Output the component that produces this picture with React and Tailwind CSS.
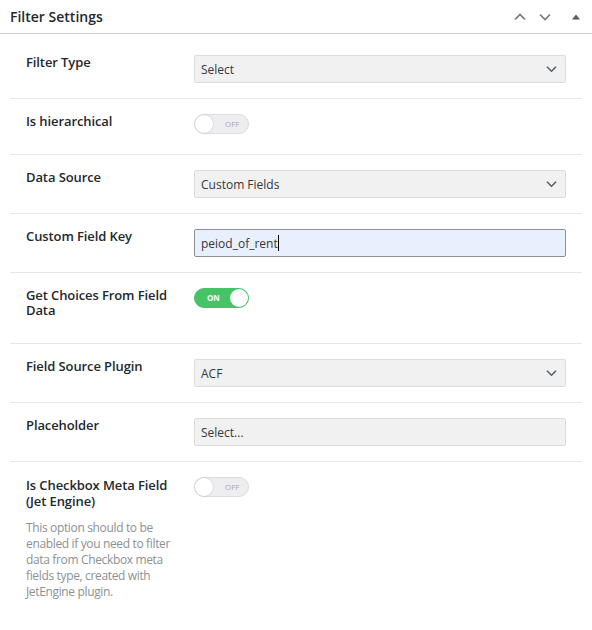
import React from 'react';

const font = { fontFamily: '"Open Sans", "Noto Sans", sans-serif' };

function Chevron({ className }) {
    return (
        <svg width="12" height="8" viewBox="0 0 12 8" className={className} fill="none">
            <path d="M1 1.5 6 6.5 11 1.5" stroke="currentColor" strokeWidth="1.6" />
        </svg>
    );
}

function SelectBox({ value }) {
    return (
        <div className="h-[28px] w-full flex items-center justify-between bg-[#f1f1f1] border border-[#dcdcde] rounded-[2px] pl-[6px] pr-[8px] text-[12px] text-[#32373c]">
            <span className="pt-[1px]">{value}</span>
            <Chevron className="text-[#555d66] w-[11px]" />
        </div>
    );
}

function TextBox({ value, caret, bg = 'bg-[#f1f1f1]', border = 'border-[#dcdcde]' }) {
    return (
        <div className={`h-[28px] w-full flex items-center border ${border} ${bg} rounded-[2px] pl-[6px] text-[12px] text-[#32373c]`}>
            <span className="pt-[1px]">{value}</span>
            {caret && <span className="w-px h-[16px] bg-black" />}
        </div>
    );
}

function Toggle({ on }) {
    if (on) {
        return (
            <div className="relative w-[55px] h-[20px] rounded-full bg-[#46c367] border border-[#46c367]">
                <span className="absolute left-[12px] top-[4px] text-[8px] leading-[10px] font-bold text-white">ON</span>
                <span className="absolute right-0 top-0 w-[18px] h-[18px] rounded-full bg-white" />
            </div>
        );
    }
    return (
        <div className="relative w-[55px] h-[20px] rounded-full bg-[#eeeef0] border border-[#dcdcde]">
            <span className="absolute left-0 top-0 w-[18px] h-[18px] rounded-full bg-white shadow-[0_0_2px_rgba(0,0,0,0.2)]" />
            <span className="absolute left-[30px] top-[4px] text-[8px] leading-[10px] text-[#a7aaad]">OFF</span>
        </div>
    );
}

function Row({ label, children, first, last, note }) {
    return (
        <div className={`grid grid-cols-[168px_1fr] px-[16px] pb-[15px] ${first ? 'pt-[21px]' : 'pt-[15px]'} ${last ? '' : 'border-b border-[#e6e6e6]'}`}>
            <div className="pb-[10px] max-w-[152px]">
                <div className={`text-[13px] font-semibold text-[#23282d] tracking-[-0.1px] ${note ? 'leading-[16px]' : 'leading-[15px]'}`}>{label}</div>
                {note && (
                    <p className="mt-[11px] text-[12px] leading-[16px] text-[#8d9094] tracking-[-0.35px]">{note}</p>
                )}
            </div>
            <div>{children}</div>
        </div>
    );
}

export default function App() {
    return (
        <div className="w-[592px] h-[630px] bg-white overflow-hidden" style={font}>
            <div className="h-[34px] border-b border-[#ccd0d4] flex items-center justify-between pl-[10px] pr-[11px]">
                <h2 className="text-[14px] font-semibold text-[#23282d]">Filter Settings</h2>
                <div className="flex items-center gap-[13px] text-[#72777c]">
                    <Chevron className="rotate-180" />
                    <Chevron />
                    <svg width="10" height="8" viewBox="0 0 10 8" className="ml-[7px] text-[#555d66]">
                        <path d="M5 1.5 9 6.5H1z" fill="currentColor" />
                    </svg>
                </div>
            </div>

            <div className="px-[10px]">
                <Row label="Filter Type" first>
                    <SelectBox value="Select" />
                </Row>
                <Row label="Is hierarchical">
                    <Toggle />
                </Row>
                <Row label="Data Source">
                    <SelectBox value="Custom Fields" />
                </Row>
                <Row label="Custom Field Key">
                    <TextBox value="peiod_of_rent" caret bg="bg-[#e8f0fe]" border="border-[#8c8f94]" />
                </Row>
                <Row label="Get Choices From Field Data">
                    <Toggle on />
                </Row>
                <Row label="Field Source Plugin">
                    <SelectBox value="ACF" />
                </Row>
                <Row label="Placeholder">
                    <TextBox value="Select..." />
                </Row>
                <Row
                    label="Is Checkbox Meta Field (Jet Engine)"
                    last
                    note="This option should to be enabled if you need to filter data from Checkbox meta fields type, created with JetEngine plugin."
                >
                    <Toggle />
                </Row>
            </div>
        </div>
    );
}
